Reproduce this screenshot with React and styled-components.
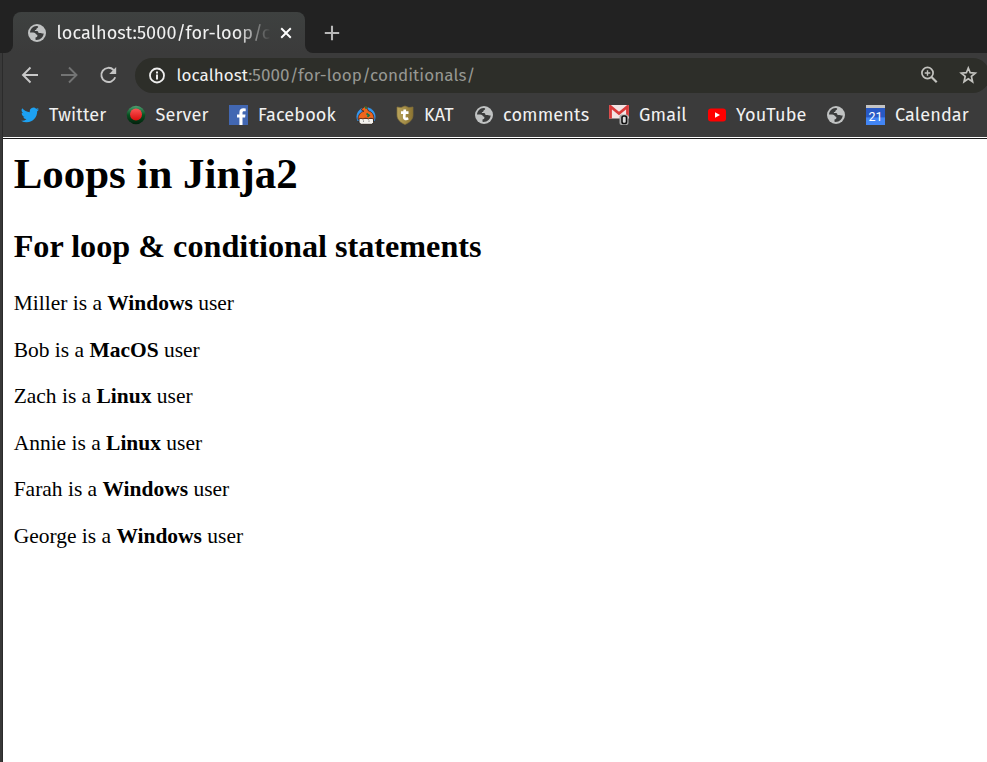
import React from 'react';
import styled, { createGlobalStyle } from 'styled-components';

const Global = createGlobalStyle`
  * { box-sizing: border-box; }
  html, body { margin: 0; padding: 0; background: #fff; overflow: hidden; }
  svg { display: block; flex: none; }
`;

const Window = styled.div`
  width: 987px;
  height: 762px;
  overflow: hidden;
  display: flex;
  flex-direction: column;
  background: linear-gradient(90deg, #393939 2px, #2b2b2b 2px, #2b2b2b 3px, #3b3b3b 3px);
  font-family: 'Fira Sans', 'Noto Sans', sans-serif;
  color: #f1f1f1;
`;

const TabStrip = styled.div`
  height: 53px;
  display: flex;
  align-items: flex-end;
  background: #3b3b3b;
`;

const StripEdge = styled.div`
  width: 13px;
  height: 53px;
  background: #222;
  border-bottom-right-radius: 8px;
`;

const TabColumn = styled.div`
  width: 292px;
  height: 53px;
  padding-top: 12px;
  background: #222;
`;

const Tab = styled.div`
  height: 41px;
  display: flex;
  align-items: center;
  padding-left: 15px;
  border-radius: 8px 8px 0 0;
  background: linear-gradient(#3e4140, #3b3b3b);
`;

const TabTitle = styled.div`
  width: 214px;
  margin: 1px 9px 0 10.5px;
  overflow: hidden;
  white-space: nowrap;
  font-size: 18.1px;
  line-height: 24px;
  letter-spacing: 0.06px;
  -webkit-mask-image: linear-gradient(90deg, #000 180px, transparent 214px);
  mask-image: linear-gradient(90deg, #000 180px, transparent 214px);
`;

const StripRest = styled.div`
  flex: 1;
  height: 53px;
  padding: 12px 0 0 19px;
  display: flex;
  align-items: center;
  background: #222;
  border-bottom-left-radius: 8px;
`;

const Toolbar = styled.div`
  height: 45px;
  display: flex;
  align-items: center;
  padding-left: 20.5px;
`;

const NavIcons = styled.div`
  width: 114.5px;
  flex: none;
  display: flex;
  gap: 19px;
  padding-bottom: 1px;
`;

const AddressBar = styled.div`
  width: 855px;
  flex: none;
  height: 35px;
  display: flex;
  align-items: center;
  padding-left: 12px;
  border-radius: 18px;
  background: #2d2e29;
`;

const Address = styled.div`
  width: 742px;
  margin-left: 9.5px;
  font-size: 17.05px;
  line-height: 24px;
  letter-spacing: 0.07px;
  color: #979893;
  white-space: nowrap;
  b { font-weight: 400; color: #f2f2f2; }
`;

const AddressActions = styled.div`
  display: flex;
  gap: 19px;
  padding-bottom: 1px;
`;

const Bookmarks = styled.div`
  height: 39px;
  display: flex;
  align-items: center;
  padding: 0 0 5px 21px;
`;

const Bookmark = styled.div`
  width: ${p => p.$w}px;
  flex: none;
  display: flex;
  align-items: center;
  gap: ${p => p.$gap ?? 10}px;
  font-size: 18.1px;
  line-height: 24px;
  letter-spacing: 0.12px;
  white-space: nowrap;
`;

const Page = styled.main`
  flex: 1;
  margin-left: 3px;
  padding: 10.67px;
  border-top: 1px solid #fff;
  background: linear-gradient(#1b1b1b 1px, #fff 1px);
  color: #000;
  font-family: 'Liberation Serif', serif;
  font-size: 21.48px;
  h1 { margin: 0; font-size: 42.95px; line-height: 49px; }
  h2 { margin: 30px 0 26.5px; font-size: 32.2px; line-height: 37px; }
`;

const UserLine = styled.p`
  margin: 0 0 21.5px;
  line-height: 25px;
`;

const Globe = () => (
  <svg width="18" height="18" viewBox="0 0 18 18">
    <circle cx="9" cy="9" r="9" fill="#c0c2c2" />
    <path fill="#3a3b3b" d="M2 8.4C2.2 5 5 2.2 8.3 2L10 2.3c.6 1-.3 1.7-1.4 2.1-.2 1-.5 1.5-1.6 1.6-.5.7.1 1.2 1.2 1.1 1.4-.1 2.2.6 2.3 1.8h2.1c1.1.1 1.6 1 3.1.5-.3 3.4-3.1 6.4-7.2 6.5l-1-.2v-2.2c1.1 0 1.8-.5 1.9-1.7.1-1-.4-1.3-1.2-1.4-.6-1.3-1.5-2-3-2z" />
  </svg>
);

const Line = ({ d, color = '#c9c9c9', size = 20, w = 1.9 }) => (
  <svg width={size} height={size} viewBox="0 0 20 20" fill="none" stroke={color} strokeWidth={w}><path d={d} /></svg>
);

const Reload = () => (
  <svg width="20" height="20" viewBox="0 0 20 20">
    <path d="M14.6 5A7.1 7.1 0 1 0 16.2 12.2" fill="none" stroke="#c4c4c4" strokeWidth="1.9" />
    <path d="M17.2 2v7h-7z" fill="#c4c4c4" />
  </svg>
);

const Info = () => (
  <svg width="20" height="20" viewBox="0 0 20 20">
    <circle cx="10" cy="9.5" r="7" fill="none" stroke="#eee" strokeWidth="1.8" />
    <path d="M10 8.5v5M10 5.5v2" stroke="#eee" strokeWidth="2" />
  </svg>
);

const ZoomIcon = () => (
  <svg width="20" height="20" viewBox="0 0 20 20" fill="none" stroke="#c2c2be">
    <circle cx="8.5" cy="8" r="5.6" strokeWidth="1.7" />
    <path d="M12.5 12l5.2 5.2" strokeWidth="2.2" />
    <path d="M8.5 5.2v5.6M5.7 8h5.6" strokeWidth="1.4" />
  </svg>
);

const Star = () => (
  <svg width="20" height="20" viewBox="0 0 20 20" fill="none" stroke="#c2c2be" strokeWidth="1.7">
    <path d="M10.3 3l1.9 4.7 5.1.4-3.9 3.3 1.2 5.4-4.3-3-4.3 3 1.2-5.4L3.3 8.1l5.1-.4z" />
  </svg>
);

const Twitter = () => (
  <svg width="18" height="18" viewBox="0 0 24 24" fill="#1da1f2">
    <path d="M23.95 4.57a10 10 0 0 1-2.82.77 4.96 4.96 0 0 0 2.16-2.72c-.95.55-2 .95-3.13 1.18a4.92 4.92 0 0 0-8.38 4.48C7.69 8.1 4.07 6.13 1.64 3.16a4.9 4.9 0 0 0 1.52 6.57 4.9 4.9 0 0 1-2.23-.61v.06a4.92 4.92 0 0 0 3.95 4.83 5 5 0 0 1-2.21.08 4.94 4.94 0 0 0 4.6 3.42A9.87 9.87 0 0 1 0 19.54a14 14 0 0 0 7.55 2.21c9.05 0 14-7.5 14-13.98l-.02-.64a9.9 9.9 0 0 0 2.42-2.56z" />
  </svg>
);

const Server = () => (
  <svg width="20" height="20" viewBox="0 0 20 20">
    <defs>
      <linearGradient id="rim" x1="0" y1="0" x2="0" y2="1"><stop stopColor="#4ea071" /><stop offset=".5" stopColor="#075020" /><stop offset="1" stopColor="#02200c" /></linearGradient>
      <linearGradient id="red" x1="0" y1="0" x2="0" y2="1"><stop stopColor="#fb5555" /><stop offset="1" stopColor="#d90c0c" /></linearGradient>
    </defs>
    <circle cx="10" cy="10" r="9.3" fill="url(#rim)" />
    <circle cx="10" cy="9.5" r="6" fill="url(#red)" />
  </svg>
);

const Facebook = () => (
  <svg width="19" height="20" viewBox="0 0 19 20">
    <path fill="#4267b2" d="M0 0h19v20H0z" />
    <path fill="#fff" d="M10.4 20v-7.4H8V9.5h2.4V7.4c0-2.7 1.6-4.1 4-4.1l2.3.1v2.8H15c-1.2 0-1.5.6-1.5 1.5v1.8h3l-.4 3.1h-2.6V20z" />
  </svg>
);

const Chef = () => (
  <svg width="20" height="20" viewBox="0 0 20 20">
    <path d="M1.5 16A9.5 9.5 0 1 1 18.5 16z" fill="#3296ef" />
    <path d="M3 13.5h14.5v4L16 19.3H5L3 17.5z" fill="#f4f2ee" stroke="#29211d" strokeWidth=".9" />
    <path d="M2 14.5C2 10 4.5 7 8 6.2L5.5 5c0-2 2.5-2 3.5-3.8h2l.2 2.3L12.5 6c3.5.8 5.5 3.5 5.5 8.5-2-1.500-4-1.500-5.500-.5-2-1-4-1-5.500 0-1.500-.8-3-.8-5 .5z" fill="#ee651d" stroke="#5a2b18" strokeWidth=".9" />
    <path d="M9.2 1.5l1.3 2.2M10.5 8.5l2.5 1.8-1.6 1.6" stroke="#157548" strokeWidth="1.8" fill="none" />
    <path d="M7.5 15.5v1.3M13 15.500v1.300" stroke="#777" strokeWidth=".9" />
  </svg>
);

const Shield = () => (
  <svg width="18" height="20" viewBox="0 0 18 20">
    <defs><linearGradient id="gold"><stop stopColor="#bba65d" /><stop offset="1" stopColor="#8c7431" /></linearGradient></defs>
    <path d="M1 2l4 .6L9 1l4 1.600L17 2v8c0 4.700-3.500 7.600-8 9.500C4.500 17.600 1 14.700 1 10z" fill="url(#gold)" stroke="#82703b" strokeWidth=".7" />
    <path d="M8.8 4.500l-.6 7.500c-.1 2 1.900 2.600 3.900 1.200M5 7.700h7.500" fill="none" stroke="#fff" strokeWidth="2.7" />
  </svg>
);

const Gmail = () => (
  <svg width="20" height="20" viewBox="0 0 20 20">
    <path d="M0 0h20v13.5H0z" fill="#f3e4e4" />
    <path d="M1.5 13.5V1.5L10 8.5l8.5-7v10" fill="none" stroke="#d93b3b" strokeWidth="2.8" />
    <rect x="10.5" y="9.5" width="9" height="10.5" rx="2" fill="#aaa" />
    <rect x="13" y="11" width="4.5" height="7.5" rx="1.8" fill="#ddd" stroke="#111" strokeWidth="1.6" />
  </svg>
);

const YouTube = () => (
  <svg width="18" height="20" viewBox="0 0 18 20">
    <rect y="3.5" width="18" height="13" rx="3" fill="#f00" />
    <path d="M7 7.2l5 2.8-5 2.8z" fill="#fff" />
  </svg>
);

const CalendarFace = styled.div`
  width: 19px;
  height: 20px;
  border-top: 3px solid #c4c4c4;
  background: linear-gradient(#2859c5 50%, #4285f4 60%);
  font: 12.5px/18px Roboto, sans-serif;
  letter-spacing: 0;
  text-align: center;
  color: #fff;
`;

const bookmarks = [
  { icon: <Twitter />, label: 'Twitter', w: 105 },
  { icon: <Server />, label: 'Server', w: 103, gap: 9.5 },
  { icon: <Facebook />, label: 'Facebook', w: 127 },
  { icon: <Chef />, w: 40 },
  { icon: <Shield />, label: 'KAT', w: 79 },
  { icon: <Globe />, label: 'comments', w: 134 },
  { icon: <Gmail />, label: 'Gmail', w: 99 },
  { icon: <YouTube />, label: 'YouTube', w: 119 },
  { icon: <Globe />, w: 39 },
  { icon: <CalendarFace>21</CalendarFace>, label: 'Calendar', w: 110 },
];

const users = [
  ['Miller', 'Windows'], ['Bob', 'MacOS'], ['Zach', 'Linux'],
  ['Annie', 'Linux'], ['Farah', 'Windows'], ['George', 'Windows'],
];

export default function App() {
  return (
    <Window>
      <Global />
      <TabStrip>
        <StripEdge />
        <TabColumn>
          <Tab>
            <Globe />
            <TabTitle>localhost:5000/for-loop/conditionals/</TabTitle>
            <Line d="M2 2l16 16M18 2L2 18" size={12} w={3.2} color="#fff" />
          </Tab>
        </TabColumn>
        <StripRest><Line d="M10 1v18M1 10h18" size={16} w={2.6} color="#b8b8b8" /></StripRest>
      </TabStrip>
      <Toolbar>
        <NavIcons>
          <Line d="M17 10H2.5M9.5 2.5L2 10l7.5 7.5" />
          <Line d="M1 10h15.5M9 2.5l7.5 7.5L9 17.5" color="#737474" />
          <Reload />
        </NavIcons>
        <AddressBar>
          <Info />
          <Address><b>localhost</b>:5000/for-loop/conditionals/</Address>
          <AddressActions><ZoomIcon /><Star /></AddressActions>
        </AddressBar>
      </Toolbar>
      <Bookmarks>
        {bookmarks.map((b, i) => (
          <Bookmark key={i} $w={b.w} $gap={b.gap}>{b.icon}{b.label && <span>{b.label}</span>}</Bookmark>
        ))}
      </Bookmarks>
      <Page>
        <h1>Loops in Jinja2</h1>
        <h2>For loop &amp; conditional statements</h2>
        {users.map(([name, os]) => (
          <UserLine key={name}>{name} is a <b>{os}</b> user</UserLine>
        ))}
      </Page>
    </Window>
  );
}
